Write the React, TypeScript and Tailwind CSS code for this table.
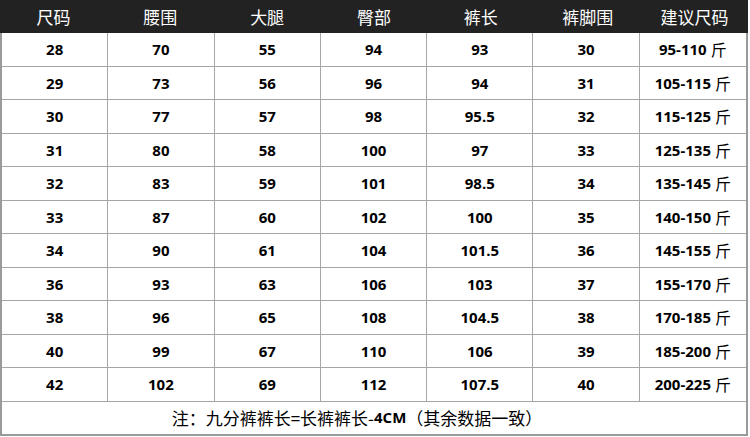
const headers = ["尺码", "腰围", "大腿", "臀部", "裤长", "裤脚围", "建议尺码"];

const rows: string[][] = [
  ["28", "70", "55", "94", "93", "30", "95-110"],
  ["29", "73", "56", "96", "94", "31", "105-115"],
  ["30", "77", "57", "98", "95.5", "32", "115-125"],
  ["31", "80", "58", "100", "97", "33", "125-135"],
  ["32", "83", "59", "101", "98.5", "34", "135-145"],
  ["33", "87", "60", "102", "100", "35", "140-150"],
  ["34", "90", "61", "104", "101.5", "36", "145-155"],
  ["36", "93", "63", "106", "103", "37", "155-170"],
  ["38", "96", "65", "108", "104.5", "38", "170-185"],
  ["40", "99", "67", "110", "106", "39", "185-200"],
  ["42", "102", "69", "112", "107.5", "40", "200-225"],
];

const cjk = "font-['Noto_Sans_CJK_SC',sans-serif]";
const num = "font-['Open_Sans','Noto_Sans_CJK_SC',sans-serif]";

export default function App() {
  return (
    <div className="w-[750px] h-[437px] bg-white overflow-hidden">
      <div className="w-[748px]">
        {/* HEADER */}
        <div className="grid grid-cols-7 h-[33px] bg-[#222222]">
          {headers.map((h) => (
            <div
              key={h}
              className={`flex items-center justify-center text-white text-[17px] ${cjk}`}
            >
              {h}
            </div>
          ))}
        </div>

        <div className="border-l-2 border-r-2 border-b-2 border-[#9a9a9a]">
          {/* BODY */}
          {rows.map((r) => (
            <div
              key={r[0]}
              className="grid grid-cols-7 h-[33.5px] border-b border-[#a6a6a6]"
            >
              {r.map((c, i) => (
                <div
                  key={i}
                  className={`flex items-center justify-center text-black text-[15px] font-bold ${num} ${
                    i < 6 ? "border-r border-[#a6a6a6]" : ""
                  }`}
                >
                  {c}
                  {i === 6 && (
                    <span className={`ml-1 font-normal text-[16px] ${cjk}`}>斤</span>
                  )}
                </div>
              ))}
            </div>
          ))}

          {/* NOTE */}
          <div
            className={`h-[32px] flex items-center justify-center pr-[34px] text-[17px] text-black ${cjk}`}
          >
            注：九分裤裤长=长裤裤长-<span className={`font-bold text-[15px] ${num}`}>4CM</span>（其余数据一致）
          </div>
        </div>
      </div>
    </div>
  );
}
